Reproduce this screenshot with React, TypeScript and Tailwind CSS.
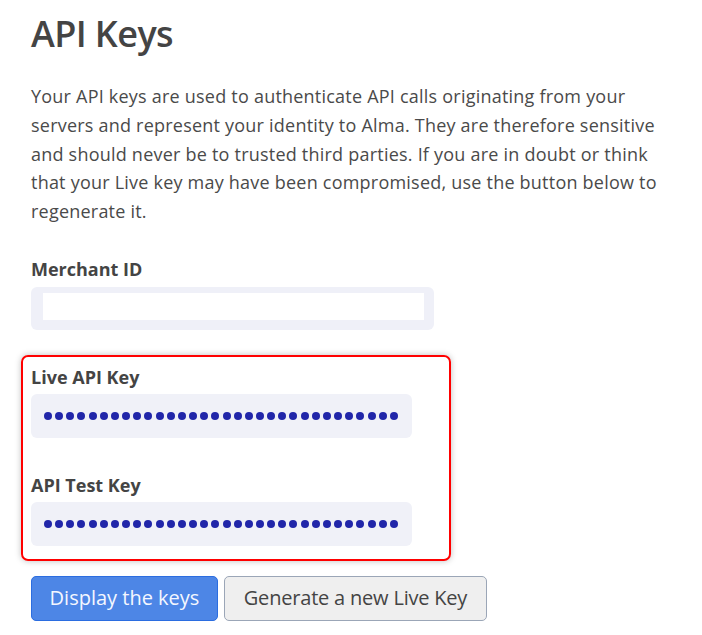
import React from "react";

const Dots = () => (
  <div className="flex items-center gap-[3.16px]">
    {Array.from({ length: 32 }).map((_, i) => (
      <span key={i} className="block w-[8px] h-[8px] rounded-full bg-[#2126a9]" />
    ))}
  </div>
);

export default function App() {
  return (
    <div
      className="w-[702px] h-[635px] bg-white text-[#454545] overflow-hidden"
      style={{ fontFamily: "'Open Sans', 'Noto Sans', sans-serif" }}
    >
      <div className="pl-[31px] pr-[20px] pt-[12px]">
        <h1 className="text-[36px] leading-[44px] font-semibold text-[#444] tracking-[-0.6px]">API Keys</h1>
        <p className="mt-[26px] w-[670px] text-[18px] leading-[28.8px] text-[#4a4a4a] tracking-[0.22px]">
          Your API keys are used to authenticate API calls originating from your
          <br />
          servers and represent your identity to Alma. They are therefore sensitive
          <br />
          and should never be to trusted third parties. If you are in doubt or think
          <br />
          that your Live key may have been compromised, use the button below to
          <br />
          regenerate it.
        </p>
        <div className="mt-[30px] text-[18px] leading-[27px] font-bold text-[#444]">Merchant ID</div>
        <div className="mt-[4px] w-[403px] rounded-[6px] bg-[#eff0f8] pt-[6px] pb-[10px] pl-[12px] pr-[10px]">
          <div className="h-[27px] bg-white" />
        </div>
      </div>
      <div className="ml-[21px] mt-[25px] w-[430px] rounded-[7px] border-2 border-[#ff0000] shadow-[0_0_6px_rgba(0,0,0,0.25)] pl-[8px] pt-[7px] pb-[13px]">
        <div className="text-[18px] leading-[27px] font-bold text-[#444]">Live API Key</div>
        <div className="mt-[3px] w-[381px] h-[44px] rounded-[6px] bg-[#f0f1f8] flex items-center pl-[13px]">
          <Dots />
        </div>
        <div className="mt-[34px] text-[18px] leading-[27px] font-bold text-[#444]">API Test Key</div>
        <div className="mt-[3px] w-[381px] h-[44px] rounded-[6px] bg-[#f0f1f8] flex items-center pl-[13px]">
          <Dots />
        </div>
      </div>
      <div className="pl-[31px] mt-[15px] flex gap-[6px]">
        <button className="h-[45px] w-[187px] rounded-[5px] border border-[#2b6de0] bg-[#4d86e6] text-[20px] text-[#f4f7ff]">
          Display the keys
        </button>
        <button className="h-[45px] w-[263px] rounded-[5px] border border-[#9ba6b7] bg-[#efefef] text-[20px] text-[#444] tracking-[-0.2px]">
          Generate a new Live Key
        </button>
      </div>
    </div>
  );
}
